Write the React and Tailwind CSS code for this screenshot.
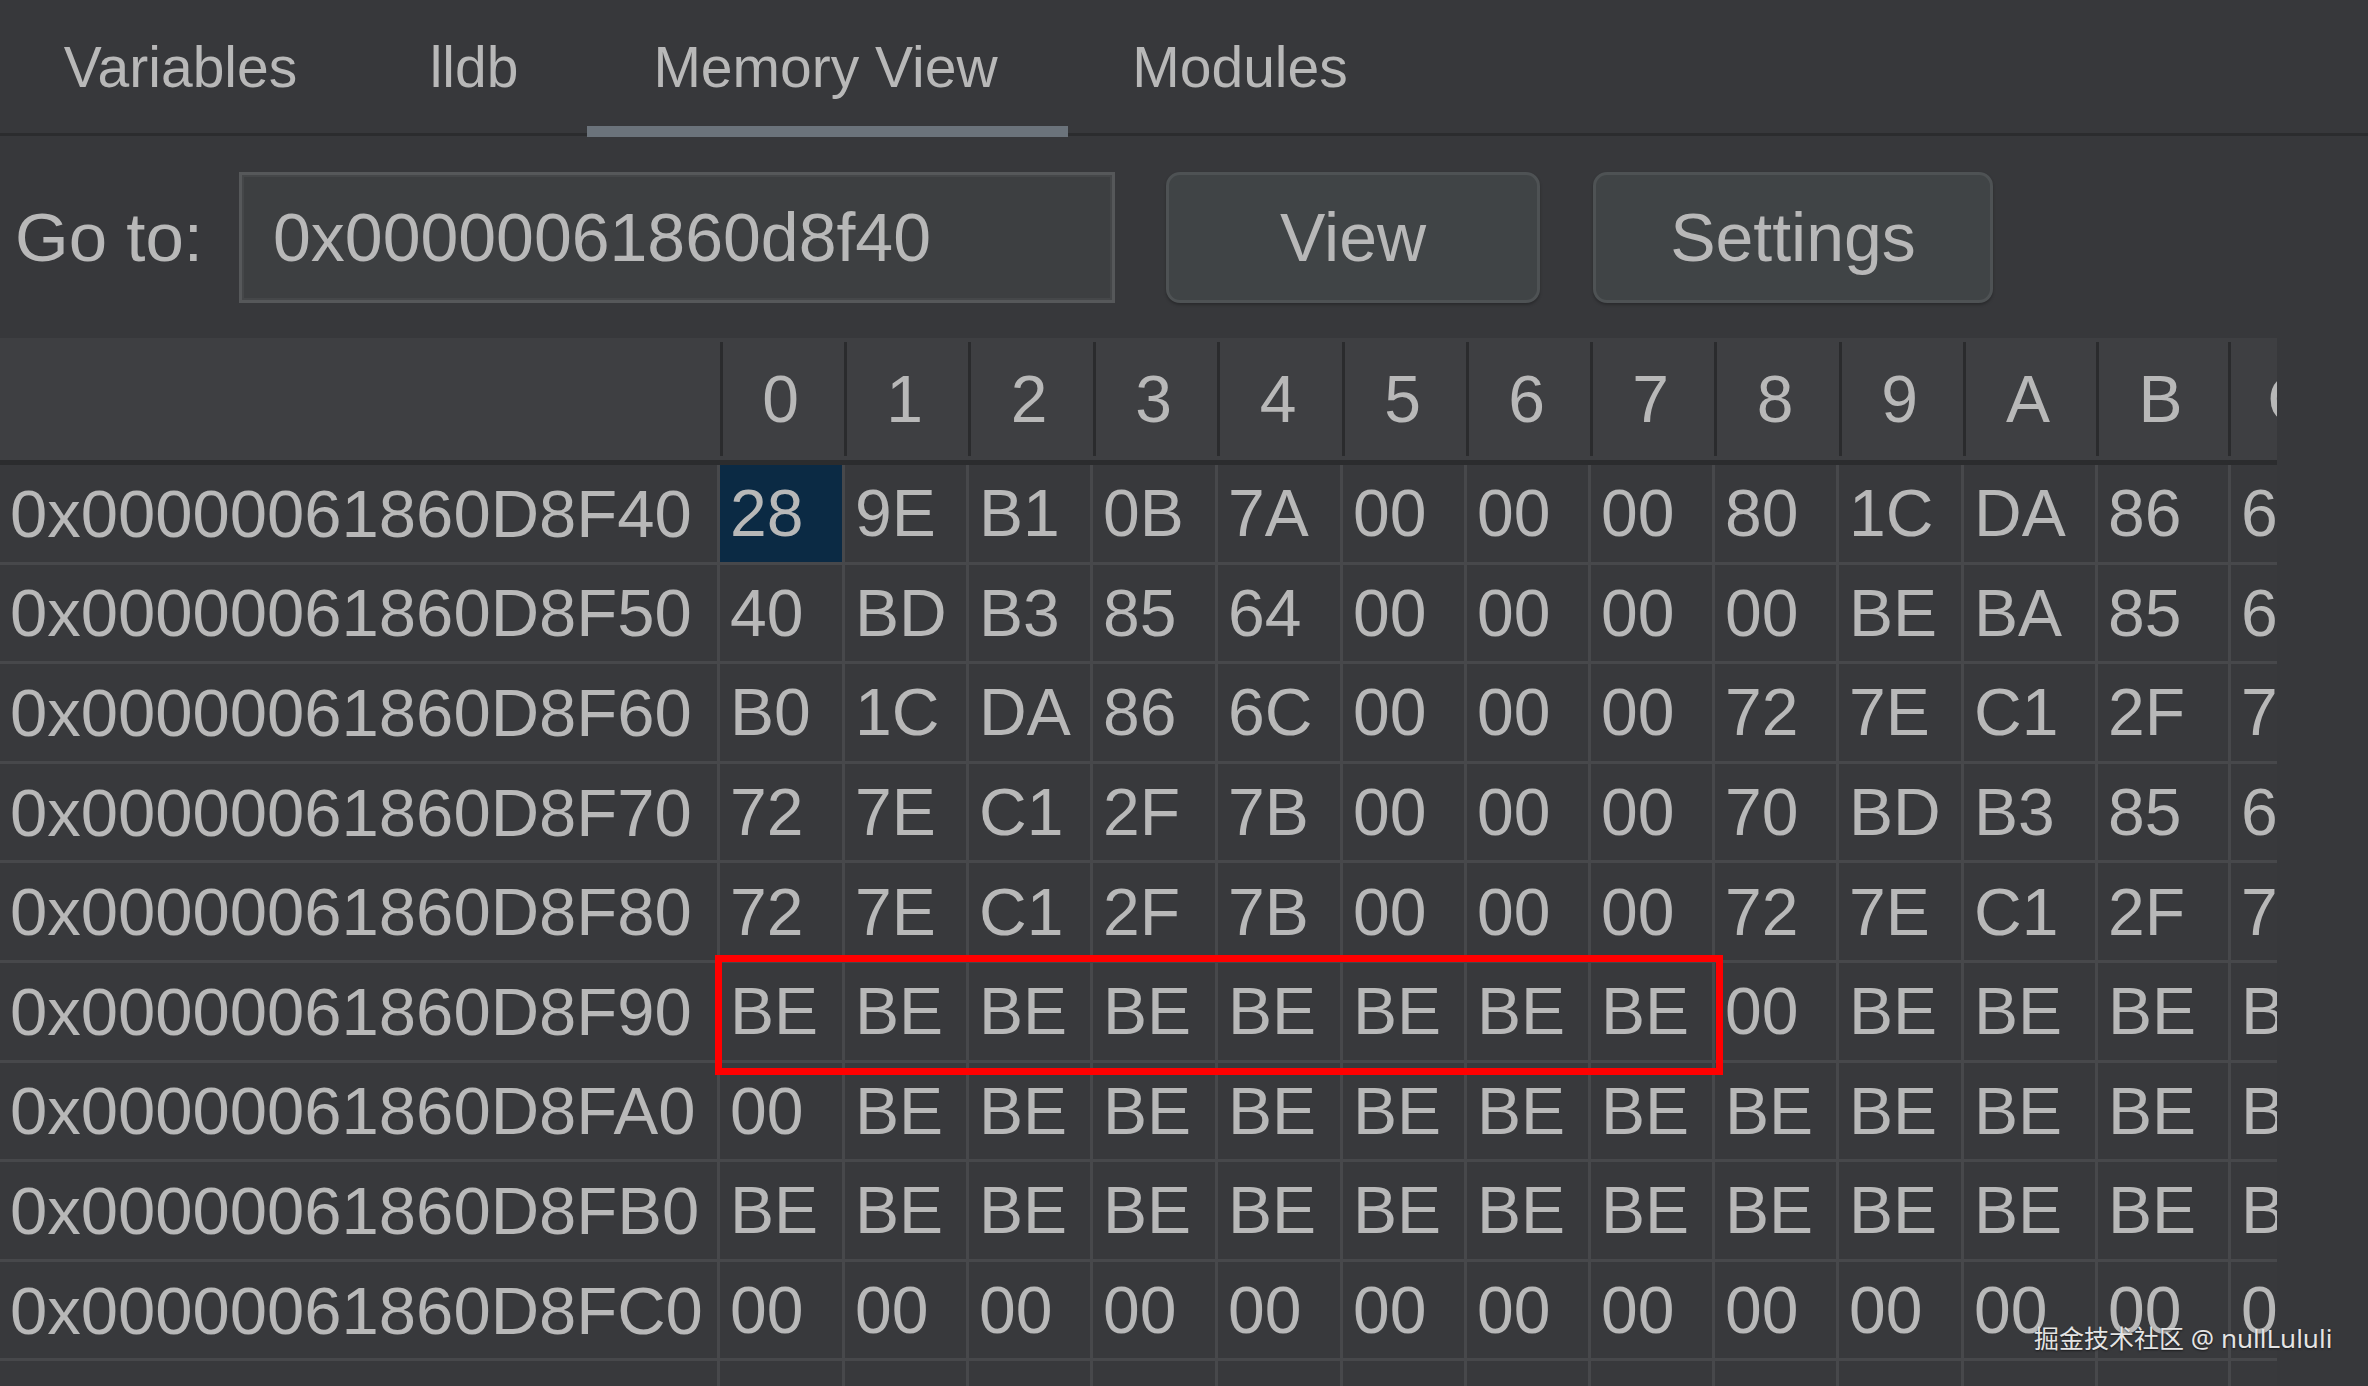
import React from "react";

const tabs = [
  { label: "Variables", w: "w-[361px]" },
  { label: "lldb", w: "w-[226px]" },
  { label: "Memory View", w: "w-[481px]", active: true },
  { label: "Modules", w: "w-[344px]" },
];

const headerCols = [
  { h: "0", w: "w-[121px]" },
  { h: "1", w: "w-[121px]" },
  { h: "2", w: "w-[122px]" },
  { h: "3", w: "w-[121px]" },
  { h: "4", w: "w-[122px]" },
  { h: "5", w: "w-[121px]" },
  { h: "6", w: "w-[121px]" },
  { h: "7", w: "w-[121px]" },
  { h: "8", w: "w-[122px]" },
  { h: "9", w: "w-[121px]" },
  { h: "A", w: "w-[130px]" },
  { h: "B", w: "w-[129px]" },
  { h: "C", w: "w-[126px]" },
];

const bodyW = [
  "w-[125px]",
  "w-[124px]",
  "w-[124px]",
  "w-[125px]",
  "w-[125px]",
  "w-[124px]",
  "w-[124px]",
  "w-[124px]",
  "w-[124px]",
  "w-[125px]",
  "w-[134px]",
  "w-[133px]",
  "w-[130px]",
];

const rows = [
  ["0x00000061860D8F40", "28 9E B1 0B 7A 00 00 00 80 1C DA 86 6C"],
  ["0x00000061860D8F50", "40 BD B3 85 64 00 00 00 00 BE BA 85 64"],
  ["0x00000061860D8F60", "B0 1C DA 86 6C 00 00 00 72 7E C1 2F 7B"],
  ["0x00000061860D8F70", "72 7E C1 2F 7B 00 00 00 70 BD B3 85 64"],
  ["0x00000061860D8F80", "72 7E C1 2F 7B 00 00 00 72 7E C1 2F 7B"],
  ["0x00000061860D8F90", "BE BE BE BE BE BE BE BE 00 BE BE BE BE"],
  ["0x00000061860D8FA0", "00 BE BE BE BE BE BE BE BE BE BE BE BE"],
  ["0x00000061860D8FB0", "BE BE BE BE BE BE BE BE BE BE BE BE BE"],
  ["0x00000061860D8FC0", "00 00 00 00 00 00 00 00 00 00 00 00 00"],
  ["0x00000061860D8FD0", "00 00 00 00 00 00 00 00 00 00 00 00 00"],
];

export default function App() {
  return (
    <div className="relative w-[2368px] h-[1386px] overflow-hidden bg-[#37383b] text-[#b8b8b8] font-['Liberation_Sans',Arial,sans-serif]">
      {/* Tab bar */}
      <div className="flex h-[136px] border-b-[3px] border-[#2b2c2e]">
        {tabs.map((t) => (
          <div
            key={t.label}
            className={`relative flex justify-center pt-[39px] text-[57px] leading-none ${t.w}`}
          >
            <span className={t.active ? "mr-[4px]" : ""}>{t.label}</span>
            {t.active && (
              <div className="absolute left-0 right-0 top-[126px] h-[11px] bg-[#6b737b]" />
            )}
          </div>
        ))}
      </div>

      {/* Go to row */}
      <div className="flex items-center h-[202px] pl-[15px] text-[68px] leading-none">
        <div className="w-[224px] text-[69px]">Go to:</div>
        <div className="flex items-center w-[876px] h-[131px] border-[3px] border-[#56585a] bg-[#3d3f41] pl-[31px] shadow-[inset_0_0_0_2px_#454749]">
          0x00000061860d8f40
        </div>
        <div className="ml-[51px] flex items-center justify-center w-[374px] h-[131px] rounded-[14px] border-[3px] border-[#4e5254] bg-[#404446] shadow-[0_2px_3px_rgba(0,0,0,0.25)]">
          View
        </div>
        <div className="ml-[53px] flex items-center justify-center w-[400px] h-[131px] rounded-[14px] border-[3px] border-[#4e5254] bg-[#404446] shadow-[0_2px_3px_rgba(0,0,0,0.25)]">
          Settings
        </div>
      </div>

      {/* Table */}
      <div className="w-[2277px] overflow-hidden">
        {/* header */}
        <div className="flex h-[127px] bg-[#3e3f42] border-b-[5px] border-[#2b2c2e] text-[66px] leading-none">
          <div className="w-[720px] shrink-0" />
          {headerCols.map((c) => (
            <React.Fragment key={c.h}>
              <div className="w-[3px] shrink-0 my-[4px] bg-[#2a2b2d]" />
              <div className={`shrink-0 flex items-center justify-center pr-[6px] ${c.w}`}>
                {c.h}
              </div>
            </React.Fragment>
          ))}
        </div>
        {/* body */}
        {rows.map(([addr, vals], ri) => (
          <div
            key={addr}
            className="flex h-[99.6px] border-b-[3px] border-[#47484b] bg-[#38393c] text-[66px] leading-none"
          >
            <div className="w-[717px] shrink-0 flex items-center pl-[10px] text-[67px]">{addr}</div>
            {vals.split(" ").map((v, ci) => (
              <div
                key={ci}
                className={`shrink-0 flex items-center pl-[10px] border-l-[3px] border-[#47484b] ${bodyW[ci]} ${
                  ri === 0 && ci === 0 ? "bg-[#0b2a44]" : ""
                }`}
              >
                {v}
              </div>
            ))}
          </div>
        ))}
      </div>

      {/* red annotation box */}
      <div className="absolute left-[715px] top-[955px] w-[1008px] h-[120px] border-[7px] border-[#ff0000]" />

      {/* watermark */}
      <div className="absolute left-[2034px] top-[1325px] flex items-baseline leading-none text-[#e4e4e4] font-['Noto_Sans_CJK_SC','Noto_Sans',sans-serif] [text-shadow:0_1px_2px_rgba(0,0,0,0.6)]">
        <span className="text-[25px]">掘金技术社区</span>
        <span className="text-[26px] font-['Noto_Sans','Noto_Sans_CJK_SC',sans-serif]">&nbsp;@ nullLululi</span>
      </div>
    </div>
  );
}
